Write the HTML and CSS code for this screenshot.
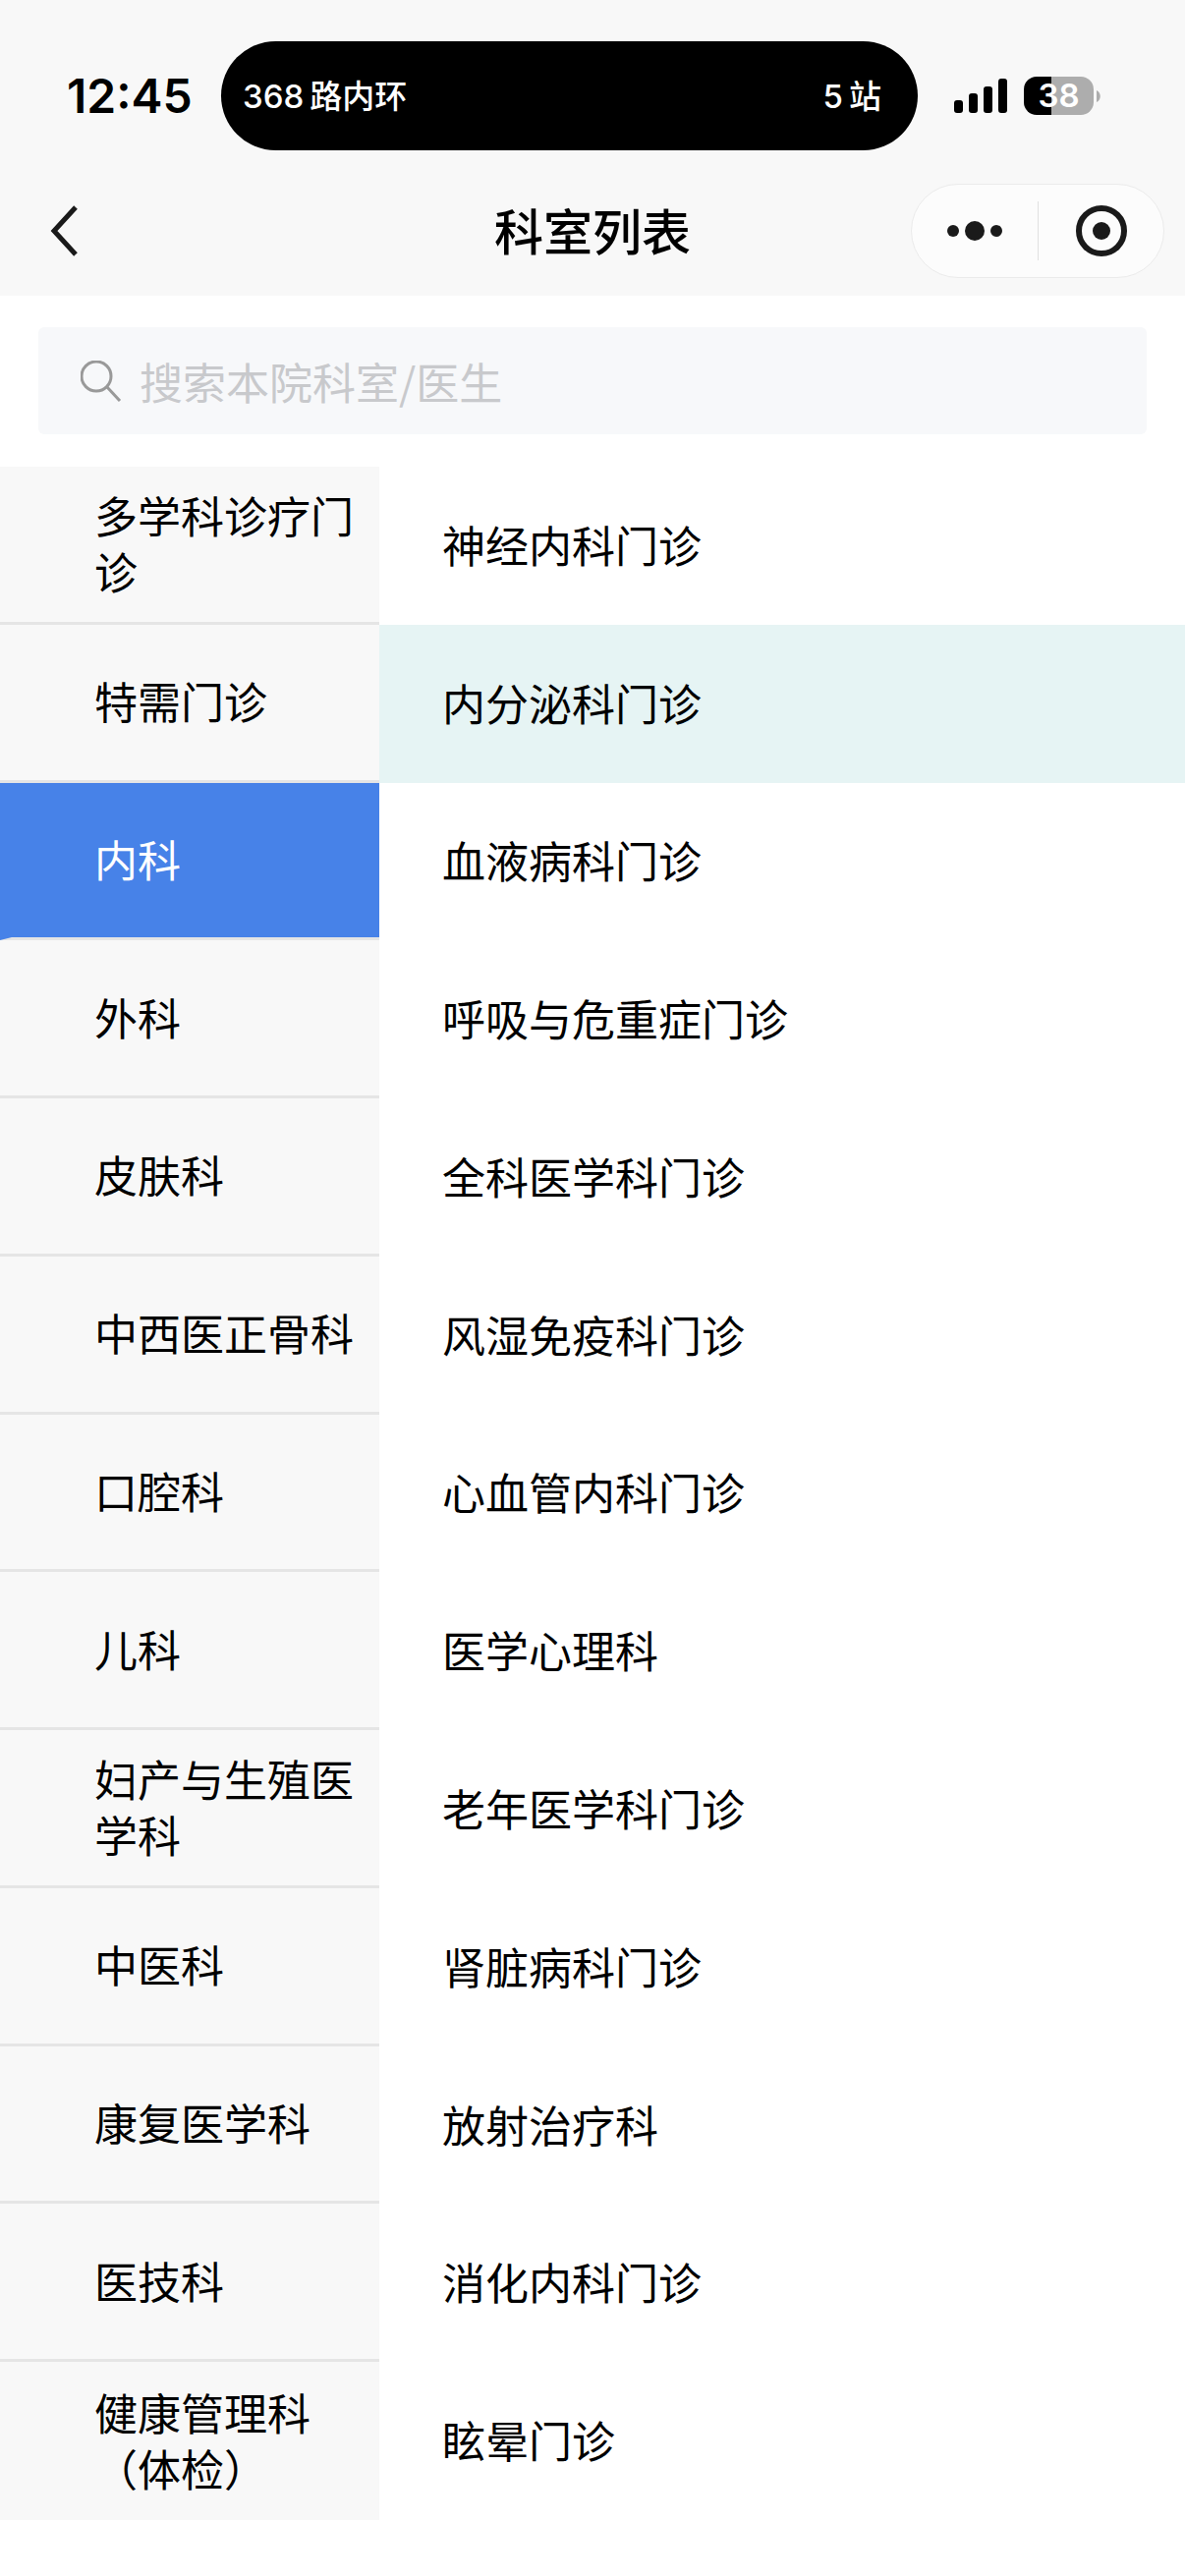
FILE: index.html
```html
<!DOCTYPE html>
<html lang="zh-CN">
<head>
    <meta charset="UTF-8">
    <meta name="viewport" content="width=device-width, initial-scale=1.0">
    <title>科室列表</title>
    <link rel="stylesheet" href="styles.css">
</head>
<body>
    <header class="header">
        <div class="status-bar">
            <div class="time">12:45</div>
            <div class="island">
                <div class="island-text"><span>368</span><span class="cjk">路内环</span></div>
                <div class="island-text"><span>5</span><span class="cjk">站</span></div>
            </div>
            <div class="indicators">
                <svg class="signal" viewBox="0 0 54 35" width="54" height="35">
                    <rect x="0" y="22" width="9" height="13" rx="3"/>
                    <rect x="15" y="15" width="9" height="20" rx="3"/>
                    <rect x="30" y="8" width="9" height="27" rx="3"/>
                    <rect x="45" y="0" width="9" height="35" rx="3"/>
                </svg>
                <div class="battery">38</div>
                <svg class="battery-cap" viewBox="0 0 4 12" width="4" height="12">
                    <path d="M0 0 C5 2 5 10 0 12 Z"/>
                </svg>
            </div>
        </div>
        <div class="nav-bar">
            <button class="back" aria-label="返回">
                <svg viewBox="0 0 28 52" width="28" height="52">
                    <path d="M26 2 L4 26 L26 50"/>
                </svg>
            </button>
            <h1>科室列表</h1>
            <div class="capsule">
                <button aria-label="更多">
                    <svg viewBox="0 0 56 24" width="56" height="24">
                        <circle cx="6" cy="12" r="6"/>
                        <circle cx="28" cy="12" r="10"/>
                        <circle cx="50" cy="12" r="6"/>
                    </svg>
                </button>
                <button aria-label="关闭">
                    <svg viewBox="0 0 52 52" width="52" height="52">
                        <circle class="ring" cx="26" cy="26" r="23"/>
                        <circle cx="26" cy="26" r="9"/>
                    </svg>
                </button>
            </div>
        </div>
    </header>

    <label class="search">
        <svg viewBox="0 0 42 42" width="42" height="42">
            <circle cx="16" cy="16" r="15"/>
            <path d="M27 27 L40 41"/>
        </svg>
        <input type="text" placeholder="搜索本院科室/医生" aria-label="搜索本院科室/医生">
    </label>

    <main class="lists">
        <nav class="categories">
            <button>多学科诊疗门诊</button>
            <button>特需门诊</button>
            <button class="active">内科</button>
            <button>外科</button>
            <button>皮肤科</button>
            <button>中西医正骨科</button>
            <button>口腔科</button>
            <button>儿科</button>
            <button>妇产与生殖医学科</button>
            <button>中医科</button>
            <button>康复医学科</button>
            <button>医技科</button>
            <button>健康管理科（体检）</button>
        </nav>
        <div class="departments">
            <a href="#">神经内科门诊</a>
            <a href="#" class="selected">内分泌科门诊</a>
            <a href="#">血液病科门诊</a>
            <a href="#">呼吸与危重症门诊</a>
            <a href="#">全科医学科门诊</a>
            <a href="#">风湿免疫科门诊</a>
            <a href="#">心血管内科门诊</a>
            <a href="#">医学心理科</a>
            <a href="#">老年医学科门诊</a>
            <a href="#">肾脏病科门诊</a>
            <a href="#">放射治疗科</a>
            <a href="#">消化内科门诊</a>
            <a href="#">眩晕门诊</a>
        </div>
    </main>
</body>
</html>
```
FILE: styles.css
```css
* {
    box-sizing: border-box;
}
body {
    font-family: Inter, 'Noto Sans CJK SC', sans-serif;
    background: #fff;
    color: #000;
    margin: 0;
    display: flex;
    flex-direction: column;
    min-height: 100vh;
}
button {
    padding: 0;
    border: none;
    background: none;
    font: inherit;
    color: inherit;
    cursor: pointer;
}
svg {
    display: block;
    flex-shrink: 0;
}

/* 状态栏 */
.header {
    background: #f8f8f8;
}
.status-bar {
    display: flex;
    align-items: center;
    padding: 42px 0 16px;
}
.time {
    width: 225px;
    padding-left: 68px;
    font-size: 48px;
    font-weight: 600;
}
.island {
    flex: 1;
    display: flex;
    justify-content: space-between;
    align-items: center;
    height: 111px;
    padding: 0 37px 0 22px;
    border-radius: 56px;
    background: #000;
    color: #fff;
    font-size: 33px;
    font-weight: 500;
}
.island-text {
    display: flex;
    align-items: center;
    gap: 6px;
}
.cjk {
    padding-bottom: 4px;
}
.indicators {
    width: 272px;
    padding-left: 37px;
    display: flex;
    align-items: center;
}
.battery {
    width: 71px;
    height: 39px;
    margin: 0 3px 0 17px;
    border-radius: 13px;
    background: linear-gradient(to right, #000 28px, #adadad 28px);
    color: #fff;
    font-size: 33px;
    font-weight: 600;
    line-height: 39px;
    text-align: center;
}
.battery-cap {
    fill: #adadad;
}

/* 导航栏 */
.nav-bar {
    display: grid;
    grid-template-columns: 1fr auto 1fr;
    align-items: center;
    height: 132px;
    padding: 0 21px;
}
.back {
    justify-self: start;
    margin-left: 30px;
}
.back path {
    fill: none;
    stroke: #1a1a1a;
    stroke-width: 5;
}
h1 {
    margin: 0;
    padding-bottom: 4px;
    font-size: 50px;
    font-weight: 500;
}
.capsule {
    justify-self: end;
    display: flex;
    width: 258px;
    height: 96px;
    border: 1px solid #ebebeb;
    border-radius: 48px;
    background: #fcfcfc;
    fill: #1a1a1a;
}
.capsule button {
    flex: 1;
    display: flex;
    align-items: center;
    justify-content: center;
}
.capsule button + button::before {
    content: '';
    width: 1px;
    height: 60px;
    background: #e0e0e0;
    margin-right: auto;
}
.capsule button + button svg {
    margin-right: auto;
}
.ring {
    fill: none;
    stroke: #1a1a1a;
    stroke-width: 6;
}

/* 搜索框 */
.search {
    display: flex;
    align-items: center;
    gap: 18px;
    height: 109px;
    margin: 32px 39px 33px;
    padding: 0 43px;
    border-radius: 6px;
    background: #f7f8fa;
}
.search svg {
    fill: none;
    stroke: #999;
    stroke-width: 3;
}
.search input {
    flex: 1;
    min-width: 0;
    padding: 0;
    border: none;
    outline: none;
    background: none;
    font-family: 'Noto Sans CJK SC', sans-serif;
    font-size: 44px;
}
.search input::placeholder {
    color: #c8c9cc;
}

/* 科室列表 */
.lists {
    flex: 1;
    display: flex;
    margin-bottom: 57px;
    font-family: 'Noto Sans CJK SC', sans-serif;
    font-size: 44px;
    line-height: 57px;
}
.categories, .departments {
    display: grid;
    grid-auto-rows: 1fr;
}
.categories {
    width: 32%;
    background: #f8f8f8;
}
.departments {
    flex: 1;
}
.categories button {
    padding: 0 24px 2px 96px;
    border-bottom: 3px solid #e5e5e5;
    text-align: left;
}
.categories button:last-child {
    border-bottom: none;
}
.categories .active {
    padding-left: 84px;
    border-left: 12px solid #4782e8;
    background: #4782e8;
    color: #fff;
}
.departments a {
    display: flex;
    align-items: center;
    padding: 0 0 2px 64px;
    color: inherit;
    text-decoration: none;
}
.departments .selected {
    background: #e6f4f4;
}
```
